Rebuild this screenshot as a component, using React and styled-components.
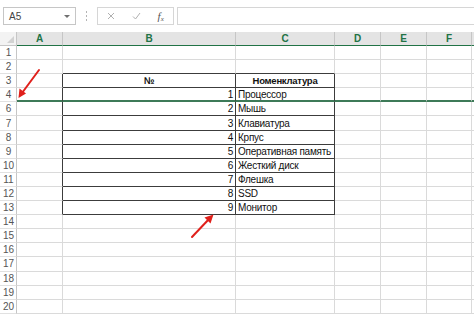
import React from "react";
import styled, { createGlobalStyle } from "styled-components";

const Global = createGlobalStyle`
  html, body { margin: 0; padding: 0; background: #fff; overflow: hidden; }
  * { box-sizing: border-box; }
  body { font-family: "Liberation Sans", Arial, sans-serif; }
`;

const Page = styled.div`
  position: relative;
  width: 474px;
  height: 316px;
  overflow: hidden;
  background: #fff;
`;

const Toolbar = styled.div`
  height: 32px;
  display: flex;
  align-items: flex-start;
  padding: 7px 0 0 3px;
`;

const NameBox = styled.div`
  width: 73px;
  height: 18px;
  border: 1px solid #c6c6c6;
  display: flex;
  align-items: center;
  justify-content: space-between;
  padding: 0 5px 0 5px;
  font-size: 10px;
  color: #444;
`;

const DropArrow = styled.span`
  width: 0;
  height: 0;
  border-left: 3px solid transparent;
  border-right: 3px solid transparent;
  border-top: 3px solid #707070;
`;

const Dots = styled.div`
  width: 21px;
  height: 18px;
  display: flex;
  flex-direction: column;
  align-items: center;
  justify-content: center;
  gap: 2px;
  padding-right: 1px;
  & > span {
    width: 1px;
    height: 2px;
    background: #b4b4b4;
  }
`;

const FxGroup = styled.div`
  width: 77px;
  height: 18px;
  border: 1px solid #d6d6d6;
  display: flex;
  align-items: center;
  padding-left: 1px;
`;

const FxSlot = styled.div`
  width: 25px;
  display: flex;
  align-items: center;
  justify-content: center;
  color: #9a9a9a;
  font-size: 10px;
`;

const FxText = styled.span`
  font-family: "Liberation Serif", "Times New Roman", serif;
  font-style: italic;
  font-size: 11px;
  color: #555;
  & > sub {
    font-size: 7px;
    vertical-align: -1px;
  }
`;

const FormulaInput = styled.div`
  flex: 1;
  height: 18px;
  margin-left: 3px;
  border: 1px solid #d6d6d6;
  border-right: none;
`;

const Sheet = styled.div`
  display: grid;
  grid-template-columns: 17px 46px 173px 99px 46px 46px 45px 1fr;
  grid-template-rows: 14px;
  grid-auto-rows: 14.1px;
`;

const Corner = styled.div`
  position: relative;
  background: #f3f3f3;
  border-right: 1px solid #c6c6c6;
  border-bottom: 1px solid #c6c6c6;
  &::after {
    content: "";
    position: absolute;
    right: 2px;
    bottom: 2px;
    width: 0;
    height: 0;
    border-left: 7px solid transparent;
    border-bottom: 7px solid #d2d2d2;
  }
`;

const ColHead = styled.div`
  background: #e4e4e4;
  border-right: 1px solid ${(p) => (p.$last ? "transparent" : "#c6c6c6")};
  border-bottom: 1px solid #217346;
  color: #217346;
  font-weight: bold;
  font-size: 10px;
  display: flex;
  align-items: center;
  justify-content: center;
`;

const RowHead = styled.div`
  border-right: 1px solid #c6c6c6;
  border-bottom: 1px solid #e1e1e1;
  color: #555;
  font-size: 10px;
  display: flex;
  align-items: center;
  justify-content: center;
  padding-left: 1px;
`;

const Cell = styled.div`
  border-right: 1px solid ${(p) => p.$right};
  border-bottom: ${(p) => p.$bottomW}px solid ${(p) => p.$bottom};
  font-size: ${(p) => (p.$bold ? "9.5px" : "10px")};
  letter-spacing: -0.25px;
  font-weight: ${(p) => (p.$bold ? "bold" : "normal")};
  color: #111;
  display: flex;
  align-items: center;
  justify-content: ${(p) => p.$align};
  padding: 0 2px;
  white-space: nowrap;
  overflow: visible;
`;

const Arrows = styled.svg`
  position: absolute;
  left: 0;
  top: 0;
  pointer-events: none;
`;

const LIGHT = "#dadada";
const DARK = "#3c3c3c";
const GREEN = "#3d7a58";

const cols = ["A", "B", "C", "D", "E", "F", ""];
const rows = [1, 2, 3, 4, 6, 7, 8, 9, 10, 11, 12, 13, 14, 15, 16, 17, 18, 19, 20];
const items = {
  4: "Процессор",
  6: "Мышь",
  7: "Клавиатура",
  8: "Крпус",
  9: "Оперативная память",
  10: "Жесткий диск",
  11: "Флешка",
  12: "SSD",
  13: "Монитор",
};
const numbers = { 4: 1, 6: 2, 7: 3, 8: 4, 9: 5, 10: 6, 11: 7, 12: 8, 13: 9 };

const inTable = (r) => r >= 3 && r <= 13;

function cellProps(r, c) {
  const tableCol = c === 1 || c === 2;
  let bottom = LIGHT;
  let bottomW = 1;
  if (r === 4) {
    bottom = GREEN;
    bottomW = 2;
  } else if ((inTable(r) || r === 2) && tableCol) {
    bottom = DARK;
  }
  let right = LIGHT;
  if (inTable(r) && c <= 2) right = DARK;
  if (c === 6) right = "transparent";
  let text = "";
  let align = "flex-start";
  let bold = false;
  if (r === 3 && c === 1) {
    text = "№";
    align = "center";
    bold = true;
  } else if (r === 3 && c === 2) {
    text = "Номенклатура";
    align = "center";
    bold = true;
  } else if (c === 1 && numbers[r]) {
    text = String(numbers[r]);
    align = "flex-end";
  } else if (c === 2 && items[r]) {
    text = items[r];
  }
  return { bottom, bottomW, right, text, align, bold };
}

export default function App() {
  return (
    <Page>
      <Global />
      <Toolbar>
        <NameBox>
          <span>A5</span>
          <DropArrow />
        </NameBox>
        <Dots>
          <span />
          <span />
          <span />
        </Dots>
        <FxGroup>
          <FxSlot>
            <svg width="8" height="8" viewBox="0 0 8 8">
              <path d="M1 1L7 7M7 1L1 7" stroke="#b0b0b0" strokeWidth="1" />
            </svg>
          </FxSlot>
          <FxSlot>
            <svg width="9" height="8" viewBox="0 0 9 8">
              <path d="M1 4.5L3.5 7L8 1" stroke="#b0b0b0" strokeWidth="1" fill="none" />
            </svg>
          </FxSlot>
          <FxSlot>
            <FxText>
              f<sub>x</sub>
            </FxText>
          </FxSlot>
        </FxGroup>
        <FormulaInput />
      </Toolbar>
      <Sheet>
        <Corner />
        {cols.map((c, i) => (
          <ColHead key={i} $last={i === cols.length - 1}>
            {c}
          </ColHead>
        ))}
        {rows.map((r) => (
          <React.Fragment key={r}>
            <RowHead>{r}</RowHead>
            {cols.map((_, c) => {
              const p = cellProps(r, c);
              return (
                <Cell
                  key={c}
                  $right={p.right}
                  $bottom={p.bottom}
                  $bottomW={p.bottomW}
                  $align={p.align}
                  $bold={p.bold}
                >
                  {p.text}
                </Cell>
              );
            })}
          </React.Fragment>
        ))}
      </Sheet>
      <Arrows width="474" height="316" viewBox="0 0 474 316">
        <line x1="39" y1="70" x2="22" y2="93" stroke="#e0201b" strokeWidth="2" strokeLinecap="round" />
        <path d="M18.5 98 L19.5 88.5 L26 93.5 Z" fill="#e0201b" />
        <line x1="192" y1="237" x2="209" y2="219" stroke="#e0201b" strokeWidth="2" strokeLinecap="round" />
        <path d="M213.5 214.5 L204.5 217.5 L210.5 223.5 Z" fill="#e0201b" />
      </Arrows>
    </Page>
  );
}
